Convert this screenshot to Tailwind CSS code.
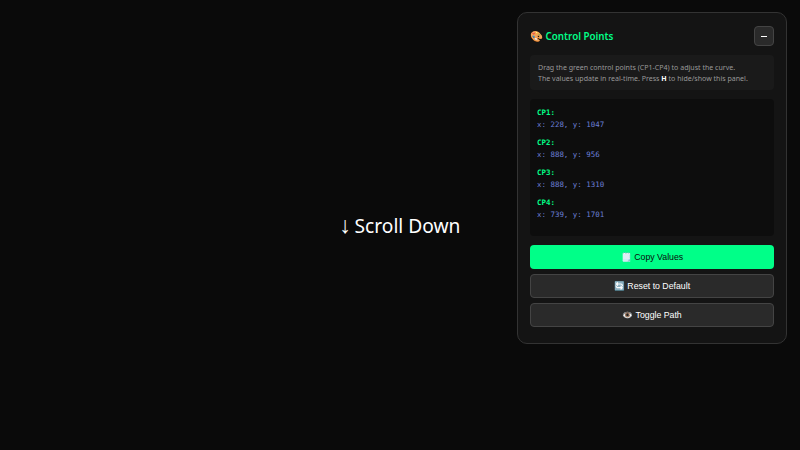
<!DOCTYPE html>
<html lang="en">
<head>
    <meta charset="UTF-8">
    <meta name="viewport" content="width=device-width, initial-scale=1.0">
    <title>Control Points</title>
    <script src="https://cdn.jsdelivr.net/npm/@tailwindcss/browser@4"></script>
</head>
<body class="bg-[#0a0a0a] overflow-hidden">
    <div class="relative w-[800px] h-[450px]">
        <div class="h-full flex items-center justify-center pt-[3px]">
            <p class="text-white text-[19.2px] font-['Noto_Sans',sans-serif]"><span class="inline-block w-[10px] leading-[0] text-[23px] font-['Liberation_Sans',sans-serif]">↓</span> Scroll Down</p>
        </div>

        <div class="absolute top-3 right-[13px] w-[270px] h-[332px] bg-[#141414] border border-[#333] rounded-[10px] px-3 pt-[13px] font-['Noto_Sans',sans-serif]">
            <div class="flex items-center justify-between h-[20px] mb-[9px]">
                <h3 class="text-[#00ff88] text-[9.8px] font-semibold pt-px"><span class="text-[10.5px]">🎨</span> Control Points</h3>
                <button class="w-[20px] h-[20px] flex items-center justify-center bg-[#2a2a2a] border border-[#444] rounded">
                    <span class="block w-[6px] h-px bg-white"></span>
                </button>
            </div>

            <div class="h-[35px] bg-[#1a1a1a] rounded px-[8px] pt-[7px] text-[#999] text-[7.05px] leading-[11px] mb-[9px]">
                <p>Drag the green control points (CP1-CP4) to adjust the curve.</p>
                <p>The values update in real-time. Press <strong class="text-white">H</strong> to hide/show this panel.</p>
            </div>

            <div class="h-[137px] bg-[#0d0d0d] rounded px-[7px] pt-[8px] text-[7.45px] leading-[12px] font-['DejaVu_Sans_Mono',monospace] flex flex-col gap-[6px] mb-[9px]">
                <div>
                    <div class="text-[#00ff88] font-bold">CP1:</div>
                    <div class="text-[#6b7fd7]">x: 228, y: 1047</div>
                </div>
                <div>
                    <div class="text-[#00ff88] font-bold">CP2:</div>
                    <div class="text-[#6b7fd7]">x: 888, y: 956</div>
                </div>
                <div>
                    <div class="text-[#00ff88] font-bold">CP3:</div>
                    <div class="text-[#6b7fd7]">x: 888, y: 1310</div>
                </div>
                <div>
                    <div class="text-[#00ff88] font-bold">CP4:</div>
                    <div class="text-[#6b7fd7]">x: 739, y: 1701</div>
                </div>
            </div>

            <div class="flex flex-col gap-[5px] text-[8.75px] font-['Liberation_Sans',sans-serif]">
                <button class="h-[24px] pt-px bg-[#00ff88] text-[#0a0a0a] rounded">🗒️ Copy Values</button>
                <button class="h-[24px] pt-px bg-[#2a2a2a] text-white border border-[#444] rounded">🔄 Reset to Default</button>
                <button class="h-[24px] pt-px bg-[#2a2a2a] text-white border border-[#444] rounded">👁️ Toggle Path</button>
            </div>
        </div>
    </div>
</body>
</html>
